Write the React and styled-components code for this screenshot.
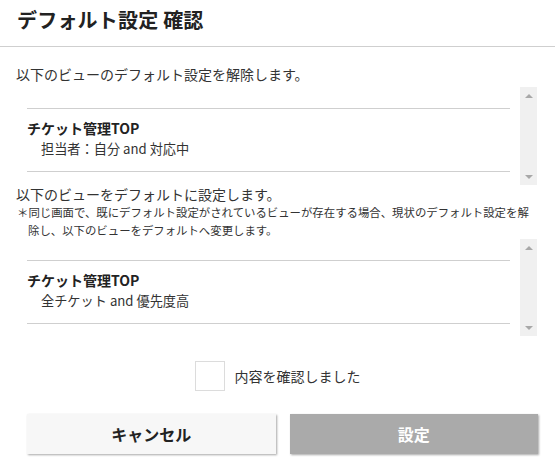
import React, { useState } from "react";
import styled, { createGlobalStyle } from "styled-components";

const Global = createGlobalStyle`
  html, body { margin: 0; padding: 0; background: #fff; }
  body {
    font-family: "Noto Sans CJK JP", "Noto Sans", sans-serif;
    color: #333;
  }
  * { box-sizing: border-box; }
`;

const Dialog = styled.div`
  width: 555px;
  height: 474px;
  display: flex;
  flex-direction: column;
  background: #fff;
`;

const Header = styled.div`
  height: 47px;
  padding: 7px 17px 0;
  border-bottom: 1px solid #cfcfcf;
`;

const Title = styled.h1`
  margin: 0;
  font-size: 20px;
  line-height: 26px;
  font-weight: 700;
  color: #222;
  letter-spacing: 0.2px;
`;

const Body = styled.div`
  padding: 18px 18px 0 16px;
  display: flex;
  flex-direction: column;
`;

const Lead = styled.p`
  margin: 0 0 ${(p) => p.$mb || 0}px;
  font-size: 14px;
  line-height: 18px;
  color: #333;
`;

const Note = styled.p`
  margin: 0;
  padding-left: 12px;
  text-indent: -11px;
  font-size: 11.4px;
  line-height: 18px;
  color: #333;
`;

const ListBox = styled.div`
  height: ${(p) => p.$h}px;
  display: flex;
`;

const ListContent = styled.div`
  flex: 1;
  padding: 21px 10px 0 11px;
`;

const Item = styled.div`
  border-top: 1px solid #cfcfcf;
  border-bottom: 1px solid #cfcfcf;
  padding: 9px 0 11px;
`;

const ItemTitle = styled.div`
  font-size: 14px;
  font-weight: 700;
  line-height: 20px;
  color: #222;
`;

const ItemSub = styled.div`
  font-size: 13.2px;
  line-height: 22px;
  padding-left: 14px;
  color: #333;
`;

const ScrollTrack = styled.div`
  width: 17px;
  background: #f0f0f0;
  display: flex;
  flex-direction: column;
  justify-content: space-between;
  align-items: center;
  padding: 7px 0 6px;
`;

const Arrow = styled.span`
  width: 0;
  height: 0;
  border-left: 4px solid transparent;
  border-right: 4px solid transparent;
  ${(p) =>
    p.$down
      ? "border-top: 4px solid #a8a8a8;"
      : "border-bottom: 4px solid #a8a8a8;"}
`;

const ConfirmRow = styled.label`
  margin-top: 25px;
  display: flex;
  justify-content: center;
  align-items: center;
  gap: 10px;
  font-size: 14px;
  color: #333;
  cursor: pointer;
`;

const Check = styled.input`
  appearance: none;
  margin: 0;
  width: 30px;
  height: 30px;
  border: 1px solid #dcdcdc;
  background: #fff;
  cursor: pointer;
`;

const Buttons = styled.div`
  margin-top: 23px;
  padding: 0 17px 0 27px;
  display: flex;
  gap: 14px;
`;

const Button = styled.button`
  flex: 1;
  height: 40px;
  border: none;
  font-family: inherit;
  font-size: 16px;
  font-weight: 700;
  background: ${(p) => (p.$primary ? "#aaaaaa" : "#f7f7f7")};
  color: ${(p) => (p.$primary ? "#fff" : "#222")};
  box-shadow: 1px 1px 2px rgba(0, 0, 0, 0.35);
  cursor: pointer;
`;

function ViewList({ height, title, sub }) {
  return (
    <ListBox $h={height}>
      <ListContent>
        <Item>
          <ItemTitle>{title}</ItemTitle>
          <ItemSub>{sub}</ItemSub>
        </Item>
      </ListContent>
      <ScrollTrack>
        <Arrow />
        <Arrow $down />
      </ScrollTrack>
    </ListBox>
  );
}

export default function App() {
  const [checked, setChecked] = useState(false);
  return (
    <>
      <Global />
      <Dialog>
        <Header>
          <Title>デフォルト設定 確認</Title>
        </Header>
        <Body>
          <Lead $mb={4}>以下のビューのデフォルト設定を解除します。</Lead>
          <ViewList height={98} title="チケット管理TOP" sub="担当者：自分 and 対応中" />
          <Lead>以下のビューをデフォルトに設定します。</Lead>
          <Note>
            ＊同じ画面で、既にデフォルト設定がされているビューが存在する場合、現状のデフォルト設定を解除し、以下のビューをデフォルトへ変更します。
          </Note>
          <ViewList height={97} title="チケット管理TOP" sub="全チケット and 優先度高" />
        </Body>
        <ConfirmRow>
          <Check
            type="checkbox"
            checked={checked}
            onChange={(e) => setChecked(e.target.checked)}
          />
          内容を確認しました
        </ConfirmRow>
        <Buttons>
          <Button>キャンセル</Button>
          <Button $primary>設定</Button>
        </Buttons>
      </Dialog>
    </>
  );
}
